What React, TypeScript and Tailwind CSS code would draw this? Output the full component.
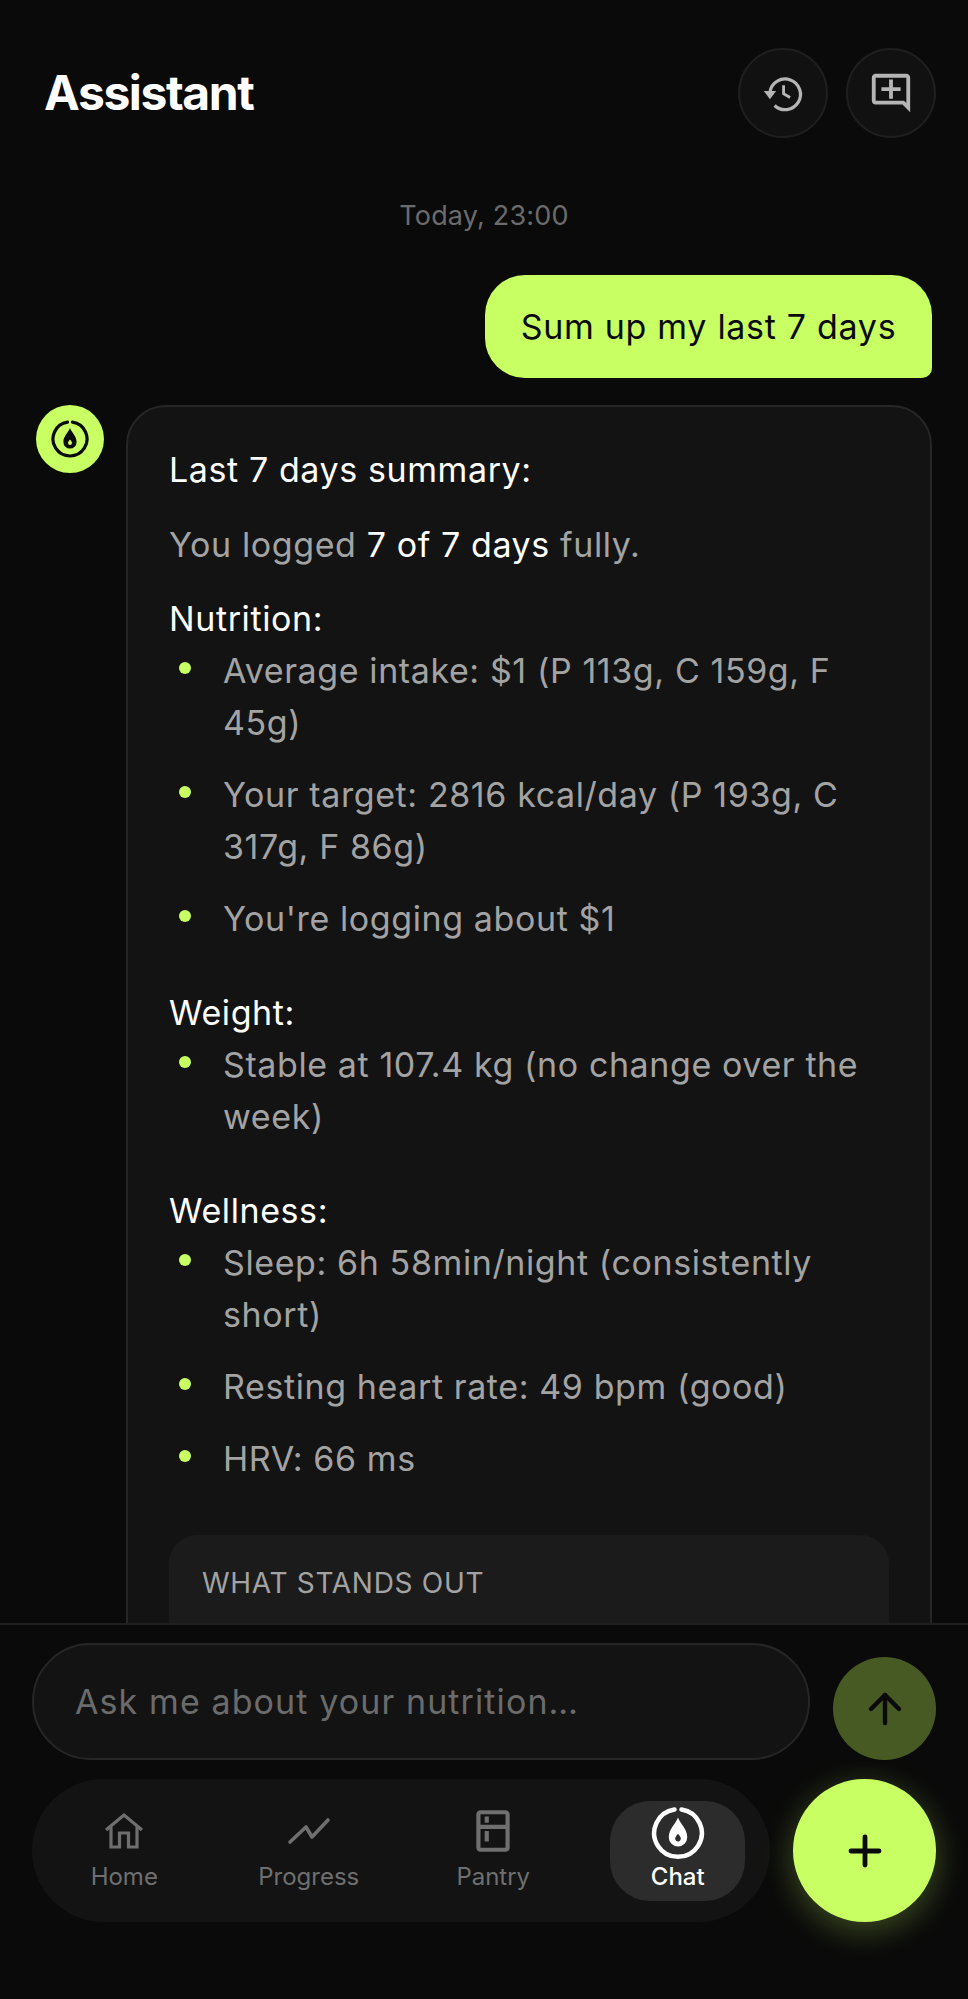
import { MdOutlineAddComment, MdOutlineKitchen } from "react-icons/md";
import { ArrowUp, Plus } from "lucide-react";

const Logo = ({ className, color }: { className: string; color: string }) => (
	<svg viewBox="0 0 40 40" className={className} fill="none">
		<path d="M22.5 3.2a17 17 0 1 1-5 0" stroke={color} strokeWidth="3.2" strokeLinecap="round" />
		<path
			fillRule="evenodd"
			clipRule="evenodd"
			d="M20 9c1.2 4 6.6 8 6.6 14a6.6 6.6 0 0 1-13.2 0C13.400 17 18.800 13 20 9Zm0 11.500c-1.300 1.400-2 2.500-2 3.500a2 2 0 0 0 4 0c0-1-.7-2.100-2-3.500Z"
			fill={color}
		/>
	</svg>
);

const HistoryIcon = () => (
	<svg viewBox="0 0 24 24" className="w-[46px] h-[46px]" fill="none" stroke="#b5b5b5">
		<path d="M5.200 11.500A8 8 0 1 1 7.600 18.500" strokeWidth="1.700" />
		<path d="M2 11h6.400l-3.200 4.200Z" fill="#b5b5b5" stroke="none" />
		<path d="M12.300 8v4.400l3.400 2" strokeWidth="1.500" />
	</svg>
);

const HomeIcon = () => (
	<svg viewBox="0 0 40 38" className="w-[40px] h-[38px]" fill="none" stroke="#6f6f6f" strokeWidth="3.200">
		<path d="M2 18 20 3l18 15" />
		<path d="M7 15v20h8.500V21h9v14H33V15" />
	</svg>
);

const ProgressIcon = () => (
	<svg viewBox="0 0 50 50" className="w-[50px] h-[50px]" fill="none" stroke="#6f6f6f" strokeWidth="3.600" strokeLinecap="round" strokeLinejoin="round">
		<path d="M6 36 22 21l6 10 16-17" />
	</svg>
);

const Bullet = ({ children }: { children: React.ReactNode }) => (
	<li className="flex">
		<span className="w-[54px] shrink-0 flex pl-[10px] pt-[17px]">
			<span className="w-[12px] h-[12px] rounded-full bg-[#c8ff62]" />
		</span>
		<span>{children}</span>
	</li>
);

const NavItem = ({ icon, label }: { icon: React.ReactNode; label: string }) => (
	<div className="flex flex-col items-center">
		<div className="h-[46px] flex items-center justify-center">{icon}</div>
		<span className="text-[24px] leading-[32px] mt-[7px] text-[#6f6f6f]">{label}</span>
	</div>
);

export default function App() {
	return (
		<div
			className="w-[968px] h-[1999px] bg-[#0a0a0a] flex flex-col overflow-hidden text-white"
			style={{ fontFamily: "Inter, 'Liberation Sans', sans-serif" }}
		>
			{/* Header */}
			<header className="flex items-center justify-between pl-[44px] pr-[32px] pt-[48px] h-[137px] shrink-0">
				<h1 className="text-[48px] leading-[90px] font-bold tracking-[-1.4px]">Assistant</h1>
				<div className="flex gap-[18px]">
					<button className="w-[90px] h-[90px] rounded-full border-2 border-[#1f1f1f] bg-[#111111] flex items-center justify-center">
						<HistoryIcon />
					</button>
					<button className="w-[90px] h-[90px] rounded-full border-2 border-[#1f1f1f] bg-[#111111] flex items-center justify-center">
						<MdOutlineAddComment className="w-[46px] h-[46px] text-[#b5b5b5]" />
					</button>
				</div>
			</header>

			{/* Messages */}
			<main className="flex-1 min-h-0 overflow-hidden px-[36px]">
				<div className="text-center text-[27px] leading-[36px] mt-[61px] tracking-[0.2px] text-[#6b6b6b]">Today, 23:00</div>
				<div className="flex justify-end mt-[41px]">
					<div className="h-[103px] w-[447px] flex items-center justify-center rounded-[40px] rounded-br-[10px] bg-[#c8ff62] text-[#0a0a0a] text-[34px] tracking-[0.7px]">
						Sum up my last 7 days
					</div>
				</div>
				<div className="flex gap-[22px] mt-[27px]">
					<div className="w-[68px] h-[68px] rounded-full bg-[#c8ff62] flex items-center justify-center shrink-0">
						<Logo className="w-[40px] h-[40px]" color="#0a0a0a" />
					</div>
					<div className="w-[806px] h-[1300px] rounded-[40px] border-2 border-[#262626] bg-[#131313] pl-[41px] pr-[41px] pt-[37px] text-[34px] leading-[52px] tracking-[0.6px] text-[#a3a3a3]">
						<p className="text-white">Last 7 days summary:</p>
						<p className="mt-[23px]">
							You logged <span className="text-white">7 of 7 days</span> fully.
						</p>
						<p className="mt-[22px] text-white">Nutrition:</p>
						<ul>
							<Bullet>Average intake: $1 (P 113g, C 159g, F 45g)</Bullet>
							<div className="h-[20px]" />
							<Bullet>Your target: 2816 kcal/day (P 193g, C 317g, F 86g)</Bullet>
							<div className="h-[20px]" />
							<Bullet>You're logging about $1</Bullet>
						</ul>
						<p className="mt-[42px] text-white">Weight:</p>
						<ul>
							<Bullet>Stable at 107.4 kg (no change over the week)</Bullet>
						</ul>
						<p className="mt-[42px] text-white">Wellness:</p>
						<ul>
							<Bullet>Sleep: 6h 58min/night (consistently short)</Bullet>
							<div className="h-[20px]" />
							<Bullet>Resting heart rate: 49 bpm (good)</Bullet>
							<div className="h-[20px]" />
							<Bullet>HRV: 66 ms</Bullet>
						</ul>
						<div className="mt-[50px] h-[200px] rounded-[28px] bg-[#1b1b1b] px-[33px] pt-[28px] text-[28px] leading-[40px] tracking-[0.7px] text-[#a3a3a3]">
							WHAT STANDS OUT
						</div>
					</div>
				</div>
			</main>

			{/* Bottom bar */}
			<footer className="h-[376px] shrink-0 border-t-2 border-[#1f1f1f] bg-[#0a0a0a] px-[32px] pt-[18px]">
				<div className="flex items-end justify-between">
					<div className="w-[778px] h-[117px] rounded-full border-2 border-[#262626] bg-[#131313] flex items-center pl-[41px] text-[34px] tracking-[1.1px] text-[#6b6b6b]">
						Ask me about your nutrition…
					</div>
					<button className="w-[103px] h-[103px] rounded-full bg-[#475a23] flex items-center justify-center">
						<ArrowUp className="w-[48px] h-[48px] text-[#0a0a0a]" strokeWidth={2.2} />
					</button>
				</div>
				<div className="flex justify-between mt-[19px]">
					<nav className="w-[738px] h-[143px] rounded-full bg-[#131313] grid grid-cols-4 items-center">
						<NavItem icon={<HomeIcon />} label="Home" />
						<NavItem icon={<ProgressIcon />} label="Progress" />
						<NavItem icon={<MdOutlineKitchen className="w-[50px] h-[50px] text-[#6f6f6f]" />} label="Pantry" />
						<div className="justify-self-center w-[135px] h-[100px] rounded-[40px] bg-[#2c2c2c] flex flex-col items-center pt-[4px]">
							<Logo className="w-[56px] h-[56px]" color="#ffffff" />
							<span className="text-[24px] leading-[32px] font-medium">Chat</span>
						</div>
					</nav>
					<button className="w-[143px] h-[143px] rounded-full bg-[#c8ff62] flex items-center justify-center shadow-[0_8px_32px_rgba(200,255,98,0.28)]">
						<Plus className="w-[48px] h-[48px] text-[#0a0a0a]" strokeWidth={2.4} />
					</button>
				</div>
			</footer>
		</div>
	);
}
